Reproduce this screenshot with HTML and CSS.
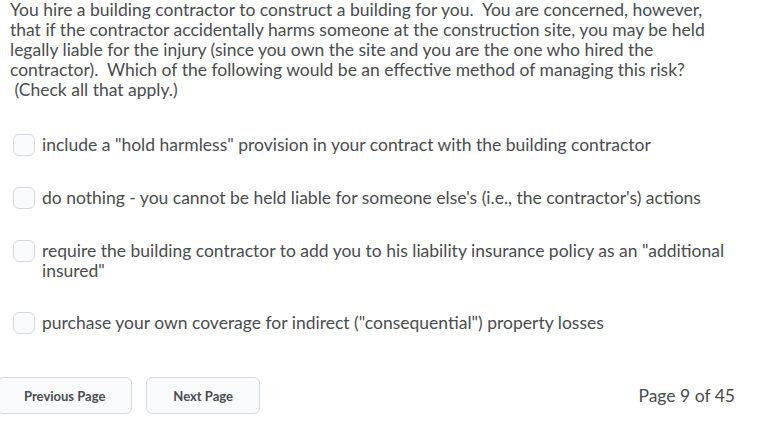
FILE: index.html
```html
<html lang="en">
<head>
  <meta charset="UTF-8">
  <meta name="viewport" content="width=device-width, initial-scale=1.0">
  <title>Quiz - Page 9</title>
  <link rel="stylesheet" href="styles.css">
</head>
<body>
  <main class="question">
    <p class="stem">You hire a building contractor to construct a building for you.&nbsp; You are concerned, however, that if the contractor accidentally harms someone at the construction site, you may be held legally liable for the injury (since you own the site and you are the one who hired the contractor).&nbsp; Which of the following would be an effective method of managing this risk?<br>&nbsp;(Check all that apply.)</p>

    <ul class="choices">
      <li><label><input type="checkbox"><span>include a "hold harmless" provision in your contract with the building contractor</span></label></li>
      <li><label><input type="checkbox"><span>do nothing - you cannot be held liable for someone else's (i.e., the contractor's) actions</span></label></li>
      <li><label><input type="checkbox"><span>require the building contractor to add you to his liability insurance policy as an "additional insured"</span></label></li>
      <li><label><input type="checkbox"><span>purchase your own coverage for indirect ("consequential") property losses</span></label></li>
    </ul>
  </main>

  <footer class="pager">
    <div class="nav">
      <button class="btn prev">Previous Page</button>
      <button class="btn">Next Page</button>
    </div>
    <div class="count">Page 9 of 45</div>
  </footer>
</body>
</html>
```

FILE: styles.css
```css
:root {
  --text: #494c4e;
  --border: #d3d9e3;
  --btn-bg: #f9fafb;
  --box-bg: #f9fbff;
}
* { box-sizing: border-box; margin: 0; padding: 0; }
body {
  font-family: Lato, 'Noto Sans', sans-serif;
  color: var(--text);
  background: #fff;
  font-size: 17.5px;
  line-height: 20px;
  overflow: hidden;
}
.question { padding: 0 0 0 10px; }
.stem { max-width: 722px; }
.choices {
  list-style: none;
  margin-top: 35px;
  display: flex;
  flex-direction: column;
  gap: 32px;
  padding-left: 3px;
}
.choices label {
  display: flex;
  align-items: flex-start;
  gap: 7px;
  cursor: pointer;
  max-width: 740px;
}
.choices input {
  appearance: none;
  -webkit-appearance: none;
  flex: none;
  width: 22px;
  height: 22px;
  border: 1px solid var(--border);
  border-radius: 6px;
  background: var(--box-bg);
  margin-top: -1px;
}
.pager {
  display: flex;
  justify-content: space-between;
  align-items: center;
  margin-top: 43px;
  padding-right: 44px;
}
.nav { display: flex; gap: 14px; margin-left: -3px; }
.btn {
  font-family: inherit;
  font-size: 13px;
  font-weight: 700;
  color: var(--text);
  background: var(--btn-bg);
  border: 1px solid var(--border);
  border-radius: 6px;
  height: 37px;
  padding: 0 26px;
  cursor: pointer;
}
.count { font-size: 17.5px; }
```
